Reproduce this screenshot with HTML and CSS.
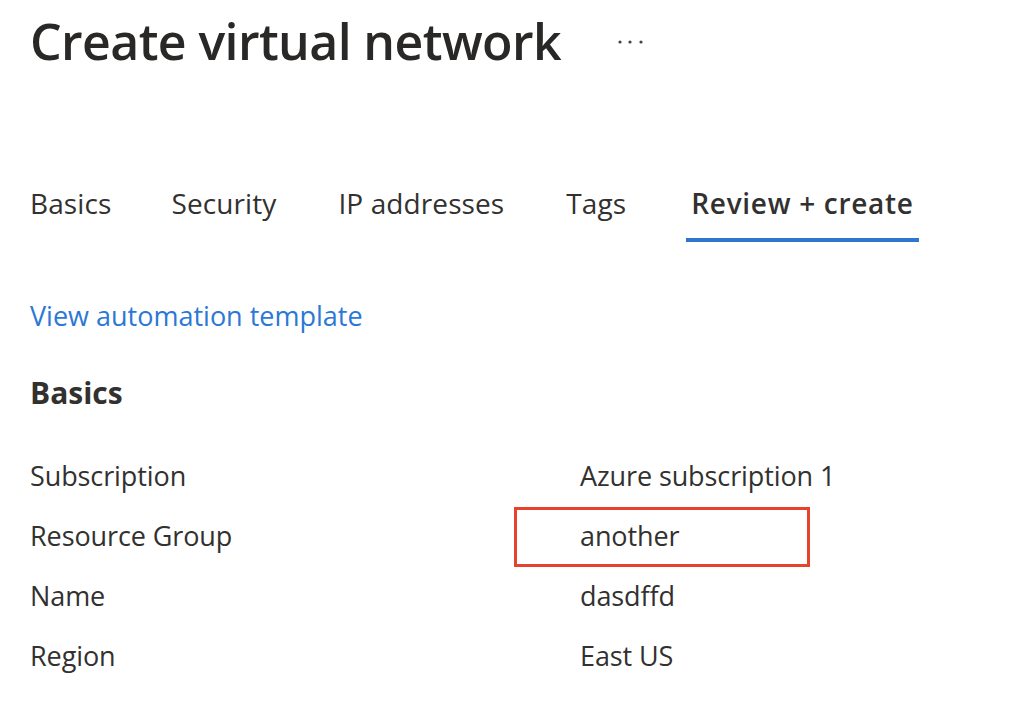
FILE: index.html
```html
<!DOCTYPE html>
<html>
<head>
<meta charset="utf-8">
<link rel="stylesheet" href="styles.css">
</head>
<body>
<div class="page">
  <header class="title-row">
    <h1 class="title">Create virtual network</h1>
    <svg class="more" width="26" height="6" viewBox="0 0 26 6" aria-label="More">
      <circle cx="2" cy="3" r="1.6" fill="#444"/>
      <circle cx="12" cy="3" r="1.6" fill="#444"/>
      <circle cx="23" cy="3" r="1.6" fill="#444"/>
    </svg>
  </header>
  <nav class="tabs">
    <span class="tab">Basics</span>
    <span class="tab">Security</span>
    <span class="tab">IP addresses</span>
    <span class="tab">Tags</span>
    <span class="tab active">Review + create</span>
  </nav>
  <a class="link">View automation template</a>
  <h2 class="section">Basics</h2>
  <div class="grid">
    <div class="label">Subscription</div><div class="value">Azure subscription 1</div>
    <div class="label">Resource Group</div><div class="value highlight">another</div>
    <div class="label">Name</div><div class="value">dasdffd</div>
    <div class="label">Region</div><div class="value">East US</div>
  </div>
</div>
</body>
</html>
```
FILE: styles.css
```css
html, body {
  margin: 0;
  background: #ffffff;
}
body {
  font-family: "Open Sans", "Noto Sans", sans-serif;
  color: #323130;
}
.page {
  padding: 0 0 0 30px;
}
.title-row {
  display: flex;
  align-items: center;
  height: 82px;
}
.title {
  margin: 0;
  font-size: 50px;
  font-weight: 600;
  color: #292827;
  letter-spacing: -0.6px;
}
.more {
  margin-left: 57px;
  position: relative;
  top: 1px;
}
.tabs {
  display: flex;
  margin-top: 92px;
}
.tab {
  font-size: 28px;
  padding: 10px 0 16px;
  margin-right: 62px;
  border-bottom: 4px solid transparent;
  letter-spacing: 0.1px;
}
.tab:first-child {
  margin-right: 60px;
}
.tab:nth-child(4) {
  margin-right: 60px;
}
.tab.active {
  font-weight: 600;
  border-bottom-color: #2e77d0;
  padding: 10px 5px 16px;
  letter-spacing: 0.7px;
}
.link {
  display: block;
  margin-top: 55px;
  font-size: 27px;
  color: #2b78d5;
}
.section {
  margin: 38px 0 0;
  font-size: 30px;
  font-weight: 700;
}
.grid {
  display: grid;
  grid-template-columns: 550px auto;
  grid-auto-rows: 60px;
  margin-top: 32px;
  font-size: 27px;
  letter-spacing: -0.1px;
}
.label, .value {
  display: flex;
  align-items: center;
}
.value {
  position: relative;
}
.value.highlight::after {
  content: "";
  position: absolute;
  left: -66px;
  top: 2px;
  width: 290px;
  height: 54px;
  border: 3px solid #e5432b;
}
```
